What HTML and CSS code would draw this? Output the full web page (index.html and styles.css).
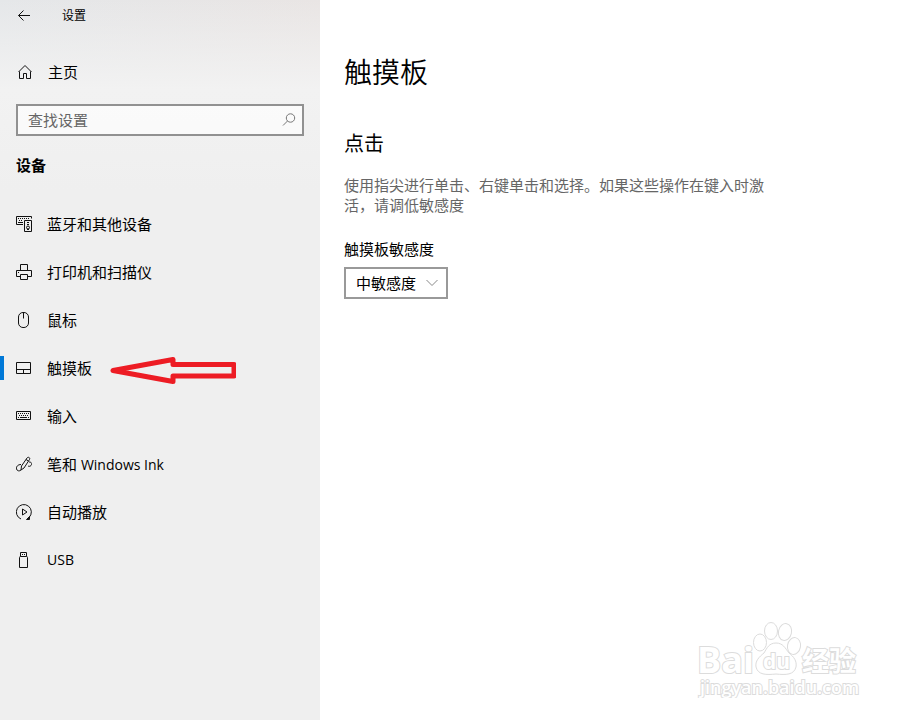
FILE: index.html
```html
<!DOCTYPE html>
<html lang="zh-CN">
<head>
<meta charset="utf-8">
<meta name="viewport" content="width=device-width, initial-scale=1">
<title>设置</title>
<link rel="stylesheet" href="styles.css">
</head>
<body>
<div class="window">
  <aside class="sidebar">
    <header class="titlebar">
      <button class="back" type="button" aria-label="返回">
        <svg class="icon" viewBox="0 0 16 16"><path d="M14 7.5H2.5M7.5 2.5l-5 5 5 5"/></svg>
      </button>
      <span class="titlebar-text">设置</span>
    </header>
    <a class="home" href="#">
      <svg class="icon" viewBox="0 0 16 16"><path d="M1.5 8L8 1.5 14.5 8M2.500 7.500v7h4v-5h3v5h4v-7"/></svg>
      <span>主页</span>
    </a>
    <form class="search">
      <input class="search-input" type="search" placeholder="查找设置" aria-label="查找设置">
      <svg class="icon search-icon" viewBox="0 0 16 16"><circle cx="9.5" cy="6" r="4.2"/><path d="M6.5 9L2 13.5"/></svg>
    </form>
    <h2 class="group">设备</h2>
    <nav class="nav">
      <a class="nav-item" href="#">
        <svg class="icon" viewBox="0 0 16 16"><path d="M7 8.5H.5v-8h15v2M8.5 4.5h7v11h-7z"/><path d="M2 2.500h12M3 4.500h4" stroke-dasharray="1 1"/><path d="M2 6.500h5"/><circle cx="12" cy="11.5" r="1.5"/><path d="M11 6.500h2M11 8.500h2M11 13.500h2"/></svg>
        <span>蓝牙和其他设备</span>
      </a>
      <a class="nav-item" href="#">
        <svg class="icon" viewBox="0 0 16 16"><path d="M4.500 6.500v-6h7v6M4 12.500H.5v-6h15v6H12M4.500 10.500h7v5h-7zM2 8.500h1"/></svg>
        <span>打印机和扫描仪</span>
      </a>
      <a class="nav-item" href="#">
        <svg class="icon" viewBox="0 0 16 16"><rect x="2.500" y=".5" width="10" height="15" rx="4.500"/><path d="M7.500.5v6"/></svg>
        <span>鼠标</span>
      </a>
      <a class="nav-item nav-item-active" href="#" aria-current="page">
        <svg class="icon" viewBox="0 0 16 16"><path d="M.5 2.500h14v11H.5zM.5 9.500h14M7.500 9.500v4"/></svg>
        <span>触摸板</span>
        <svg class="pointer" viewBox="0 0 126 28"><path d="M3 14.500L63 3.500V8.500H124V20H63V25.500Z"/></svg>
      </a>
      <a class="nav-item" href="#">
        <svg class="icon" viewBox="0 0 16 16"><path d="M.5 3.500h14v8H.5z"/><path d="M2 5.500h12M3 7.500h10" stroke-dasharray="1 1"/><path d="M2 9.500h1M4 9.500h7M12 9.500h1"/></svg>
        <span>输入</span>
      </a>
      <a class="nav-item" href="#">
        <svg class="icon" viewBox="0 0 16 16"><path d="M5 14l.5-4L11 2c1-1.500 3.500-.5 2.500 1.500L8 12zM10 3.500l2.500 1.500M5 8.500C2 8.500 0 10.500.5 13c.5 2 3 2.500 4.500 1M13 6c2.500 0 3.500 1.500 2 3.500-1 1-2 1-3 .5"/></svg>
        <span>笔和 <span class="latin">Windows Ink</span></span>
      </a>
      <a class="nav-item" href="#">
        <svg class="icon" viewBox="0 0 16 16"><path d="M5 15A7.500 7.500 0 1 1 13 13.500M6.500 5v6L11 8z"/><path class="solid" d="M10.500 15.500h3v-3z"/></svg>
        <span>自动播放</span>
      </a>
      <a class="nav-item" href="#">
        <svg class="icon" viewBox="0 0 16 16"><path d="M4.500 4.500v-4h6v4M4.500 4.500h6q1 0 1 1v10h-8v-10q0-1 1-1M6 2.500h1M8 2.500h1"/></svg>
        <span class="latin">USB</span>
      </a>
    </nav>
  </aside>
  <main class="content">
    <h1 class="page-title">触摸板</h1>
    <h2 class="section-title">点击</h2>
    <p class="description">使用指尖进行单击、右键单击和选择。如果这些操作在键入时激活，请调低敏感度</p>
    <label class="field-label" for="sensitivity">触摸板敏感度</label>
    <div class="select-box">
      <select class="select" id="sensitivity">
        <option>中敏感度</option>
      </select>
      <svg class="chevron" viewBox="0 0 12 8"><path d="M.5 1L6 6.500 11.500 1"/></svg>
    </div>
  </main>
  <svg class="watermark" viewBox="0 0 170 84" role="img" aria-label="Baidu 经验">
    <g class="mark">
      <ellipse cx="65" cy="28.500" rx="6.500" ry="8.500"/>
      <ellipse cx="76" cy="17" rx="6.500" ry="8.500"/>
      <ellipse cx="90" cy="18" rx="6.500" ry="8.500" transform="rotate(12 90 18)"/>
      <ellipse cx="99" cy="32" rx="6.500" ry="8.500" transform="rotate(10 99 32)"/>
      <path d="M81 29c-7 0-9 5-12 10-5 4-9 8-8 14 2 8 10 8 20 7 10 1 18 1 20-7 1-6-2-10-7-14-4-5-6-10-13-10z"/>
    </g>
    <text class="mark-latin" x="2" y="59">Bai</text>
    <text class="mark-du" x="68" y="55">du</text>
    <text class="mark-cjk" x="107" y="57">经验</text>
    <text class="mark-url" x="5" y="80">jingyan.baidu.com</text>
  </svg>
</div>
</body>
</html>
```
FILE: styles.css
```css
* {
  box-sizing: border-box;
}

body {
  margin: 0;
  background: #fff;
  color: #000;
  font: 15px/20px "Open Sans", "Noto Sans CJK SC", sans-serif;
}

h1, h2, p {
  margin: 0;
  font-weight: 400;
}

a {
  color: inherit;
  text-decoration: none;
}

.window {
  position: relative;
  display: grid;
  grid-template-columns: 320px 1fr;
  min-height: 100vh;
}

.sidebar {
  background:
    linear-gradient(to bottom, rgba(239, 239, 239, 0), #f2f2f2 90px, #efefef 190px),
    linear-gradient(to right, #e5e7e9, #e9e5e4);
}

.icon {
  flex: none;
  width: 16px;
  height: 16px;
  fill: none;
  stroke: #111;
  stroke-width: 1;
}

.solid {
  fill: #111;
}

.titlebar {
  display: flex;
  align-items: center;
  height: 32px;
  font-size: 12px;
}

.back {
  display: flex;
  align-items: center;
  width: 62px;
  height: 32px;
  padding: 0 16px;
  border: 0;
  background: none;
}

.home {
  display: flex;
  align-items: center;
  gap: 15px;
  height: 48px;
  margin-top: 16px;
  padding-left: 17px;
}

.search {
  display: flex;
  align-items: center;
  height: 32px;
  margin: 8px 16px 0;
  padding: 0 5px 0 10px;
  border: 2px solid #919191;
  background: rgba(255, 255, 255, 0.65);
}

.search-input {
  flex: 1;
  min-width: 0;
  padding: 0;
  border: 0;
  outline: 0;
  background: none;
  font: inherit;
}

.search-input::placeholder {
  color: #666;
  opacity: 1;
}

.search-icon {
  stroke: #777;
}

.group {
  margin: 19px 16px 25px;
  font-size: 15px;
  font-weight: 700;
}

.nav-item {
  position: relative;
  display: flex;
  align-items: center;
  gap: 15px;
  height: 48px;
  padding-left: 16px;
}

.nav-item-active::before {
  content: "";
  position: absolute;
  left: 0;
  top: 12px;
  width: 4px;
  height: 24px;
  background: #0078d7;
}

.latin {
  font-size: 14px;
}

.pointer {
  position: absolute;
  left: 110px;
  top: 12px;
  width: 126px;
  height: 28px;
  fill: none;
  stroke: #ed1c24;
  stroke-width: 5;
  stroke-linejoin: round;
}

.content {
  padding: 52px 24px 24px;
}

.page-title {
  font-size: 28px;
  font-weight: 350;
  line-height: 40px;
}

.section-title {
  margin-top: 38px;
  font-size: 20px;
  line-height: 28px;
}

.description {
  max-width: 424px;
  margin-top: 17px;
  color: #666;
}

.field-label {
  display: block;
  margin: 24px 0 8px;
}

.select-box {
  position: relative;
  width: max-content;
}

.select {
  display: block;
  width: 104px;
  height: 32px;
  padding: 0 10px;
  appearance: none;
  border: 2px solid #999;
  border-radius: 0;
  background: #fff;
  color: inherit;
  font: inherit;
}

.chevron {
  position: absolute;
  right: 10px;
  top: 12px;
  width: 12px;
  height: 8px;
  fill: none;
  stroke: #888;
  pointer-events: none;
}

.watermark {
  position: absolute;
  right: 45px;
  bottom: 22px;
  width: 170px;
  height: 84px;
  fill: #fff;
  stroke: #dcdcdc;
  stroke-width: 1;
}

.watermark text {
  font-family: "Open Sans", "Noto Sans CJK SC", sans-serif;
  font-weight: 700;
  stroke-width: 2;
  paint-order: stroke;
}

.mark-latin {
  font-size: 36px;
}

.mark-du {
  font-size: 21px;
}

.mark-cjk {
  font-size: 27px;
}

.watermark .mark-url {
  font-size: 18px;
  font-weight: 600;
}
```
